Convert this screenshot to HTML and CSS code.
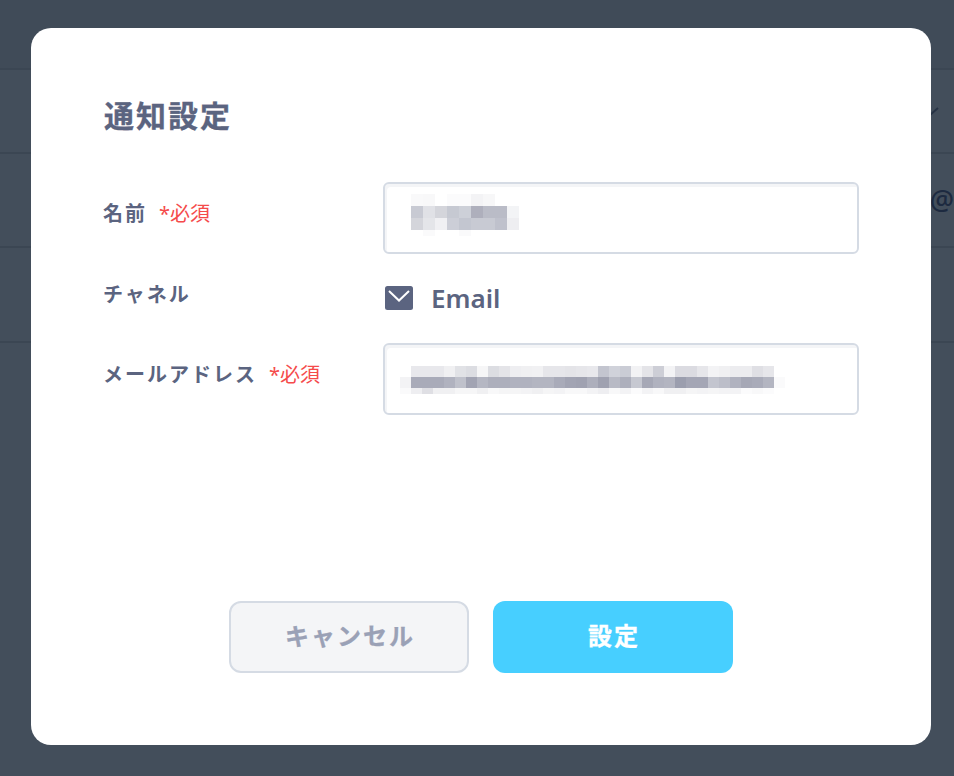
FILE: index.html
```html
<!DOCTYPE html>
<html lang="ja">
<head>
    <meta charset="UTF-8">
    <meta name="viewport" content="width=device-width, initial-scale=1.0">
    <title>通知設定</title>
    <link rel="stylesheet" href="styles.css">
</head>
<body>
    <div class="page">
        <div class="bg-row bg-row-head"></div>
        <div class="bg-row bg-row-tall">
            <svg class="bg-chevron" width="12" height="12" viewBox="0 0 12 12"><path d="M1 10 L9 3" fill="none" stroke="#273345" stroke-width="2"/></svg>
        </div>
        <div class="bg-row bg-row-item"><span class="bg-at">@</span></div>
        <div class="bg-row bg-row-last"></div>
    </div>

    <div class="overlay">
        <div class="modal">
            <h1>通知設定</h1>

            <div class="field">
                <div class="field-label">名前<span class="required">*必須</span></div>
                <div class="input">
                    <svg class="blur blur-name" viewBox="0 0 472 68" aria-hidden="true">
                        <rect x="26" y="10" fill="#f9f9fa"/><rect x="38" y="10" fill="#f8f8f9"/><rect x="62" y="10" fill="#fbfbfc"/><rect x="74" y="10" fill="#fbfbfc"/><rect x="86" y="10" fill="#f3f3f5"/><rect x="98" y="10" fill="#f7f7f8"/>
                        <rect x="26" y="22" fill="#c8cad3"/><rect x="38" y="22" fill="#e0e1e6"/><rect x="50" y="22" fill="#d4d5db"/><rect x="62" y="22" fill="#c6c9d2"/><rect x="74" y="22" fill="#cdd0d8"/><rect x="86" y="22" fill="#aeafbc"/><rect x="98" y="22" fill="#babcc7"/><rect x="110" y="22" fill="#babcc7"/><rect x="122" y="22" fill="#f3f4f6"/>
                        <rect x="26" y="34" fill="#d4d5db"/><rect x="38" y="34" fill="#e4e5e9"/><rect x="50" y="34" fill="#f0f0f3"/><rect x="62" y="34" fill="#ccced7"/><rect x="74" y="34" fill="#c3c6d0"/><rect x="86" y="34" fill="#c8cad3"/><rect x="98" y="34" fill="#c8cad3"/><rect x="110" y="34" fill="#bfc1cc"/><rect x="122" y="34" fill="#eeeef1"/>
                        <rect x="38" y="46" class="cell-low" fill="#fafafb"/><rect x="74" y="46" class="cell-low" fill="#fafafb"/>
                    </svg>
                </div>
            </div>

            <div class="field field-static">
                <div class="field-label">チャネル</div>
                <div class="channel">
                    <svg class="mail-icon" width="28" height="24" viewBox="0 0 28 24">
                        <rect width="28" height="24" rx="2.5" fill="#5b6480"/>
                        <path d="M4 5 L14 14.5 L24 5" fill="none" stroke="#fff" stroke-width="2"/>
                    </svg>
                    <span>Email</span>
                </div>
            </div>

            <div class="field">
                <div class="field-label">メールアドレス<span class="required">*必須</span></div>
                <div class="input">
                    <svg class="blur" viewBox="0 0 472 68" aria-hidden="true">
                        <rect x="26" y="21" fill="#e8e8ec"/><rect x="37" y="21" fill="#e8e8ec"/><rect x="48" y="21" fill="#e8e8ec"/><rect x="59" y="21" fill="#f0f0f2"/><rect x="70" y="21" fill="#e1e2e6"/><rect x="81" y="21" fill="#dcdde2"/><rect x="92" y="21" fill="#f6f6f7"/><rect x="103" y="21" fill="#dcdde2"/><rect x="114" y="21" fill="#e4e4e8"/><rect x="125" y="21" fill="#eeeef1"/><rect x="136" y="21" fill="#f0f0f2"/><rect x="147" y="21" fill="#f1f1f3"/><rect x="158" y="21" fill="#e6e6ea"/><rect x="169" y="21" fill="#e6e6ea"/><rect x="180" y="21" fill="#e4e4e8"/><rect x="191" y="21" fill="#e6e6ea"/><rect x="202" y="21" fill="#e8e8ec"/><rect x="213" y="21" fill="#c3c5cf"/><rect x="224" y="21" fill="#d0d2da"/><rect x="235" y="21" fill="#caccd5"/><rect x="246" y="21" fill="#f2f2f4"/><rect x="257" y="21" fill="#e4e4e8"/><rect x="268" y="21" fill="#cdced6"/><rect x="279" y="21" fill="#f3f3f5"/><rect x="290" y="21" fill="#dbdbe1"/><rect x="301" y="21" fill="#dbdbe1"/><rect x="312" y="21" fill="#e6e6ea"/><rect x="323" y="21" fill="#f3f3f5"/><rect x="334" y="21" fill="#f0f0f2"/><rect x="345" y="21" fill="#ececef"/><rect x="356" y="21" fill="#ececef"/><rect x="367" y="21" fill="#dfdfe4"/><rect x="378" y="21" fill="#e6e6ea"/>
                        <rect x="15" y="32" fill="#f3f3f5"/><rect x="26" y="32" fill="#a9abb9"/><rect x="37" y="32" fill="#a9abb9"/><rect x="48" y="32" fill="#a9abb9"/><rect x="59" y="32" fill="#b0b2bf"/><rect x="70" y="32" fill="#bfc1cb"/><rect x="81" y="32" fill="#a2a4b3"/><rect x="92" y="32" fill="#b5b7c3"/><rect x="103" y="32" fill="#adafbc"/><rect x="114" y="32" fill="#adafbc"/><rect x="125" y="32" fill="#b0b2bf"/><rect x="136" y="32" fill="#b0b2bf"/><rect x="147" y="32" fill="#b3b5c1"/><rect x="158" y="32" fill="#b3b5c1"/><rect x="169" y="32" fill="#a9abb9"/><rect x="180" y="32" fill="#a2a4b3"/><rect x="191" y="32" fill="#a0a2b1"/><rect x="202" y="32" fill="#adafbc"/><rect x="213" y="32" fill="#9fa1b0"/><rect x="224" y="32" fill="#b8bac5"/><rect x="235" y="32" fill="#adafbc"/><rect x="246" y="32" fill="#c6c8d1"/><rect x="257" y="32" fill="#a6a8b6"/><rect x="268" y="32" fill="#b0b2bf"/><rect x="279" y="32" fill="#b3b5c1"/><rect x="290" y="32" fill="#9b9eae"/><rect x="301" y="32" fill="#a4a6b5"/><rect x="312" y="32" fill="#a4a6b5"/><rect x="323" y="32" fill="#c3c5cf"/><rect x="334" y="32" fill="#bcbec9"/><rect x="345" y="32" fill="#b0b2bf"/><rect x="356" y="32" fill="#a6a8b6"/><rect x="367" y="32" fill="#a9abb9"/><rect x="378" y="32" fill="#b3b5c1"/><rect x="389" y="32" fill="#fafafb"/>
                        <rect x="15" y="43" class="cell-low" fill="#fafafb"/><rect x="26" y="43" class="cell-low" fill="#eeeef1"/><rect x="37" y="43" class="cell-low" fill="#dfdfe4"/><rect x="48" y="43" class="cell-low" fill="#f0f0f2"/><rect x="59" y="43" class="cell-low" fill="#f0f0f2"/><rect x="70" y="43" class="cell-low" fill="#f6f6f7"/><rect x="81" y="43" class="cell-low" fill="#f6f6f7"/><rect x="92" y="43" class="cell-low" fill="#f0f0f2"/><rect x="103" y="43" class="cell-low" fill="#f8f8f9"/><rect x="114" y="43" class="cell-low" fill="#f5f5f6"/><rect x="125" y="43" class="cell-low" fill="#f5f5f6"/><rect x="136" y="43" class="cell-low" fill="#f3f3f5"/><rect x="147" y="43" class="cell-low" fill="#f0f0f2"/><rect x="158" y="43" class="cell-low" fill="#f5f5f6"/><rect x="169" y="43" class="cell-low" fill="#f3f3f5"/><rect x="180" y="43" class="cell-low" fill="#f8f8f9"/><rect x="191" y="43" class="cell-low" fill="#f8f8f9"/><rect x="202" y="43" class="cell-low" fill="#f3f3f5"/><rect x="213" y="43" class="cell-low" fill="#eeeef1"/><rect x="224" y="43" class="cell-low" fill="#f8f8f9"/><rect x="235" y="43" class="cell-low" fill="#f3f3f5"/><rect x="246" y="43" class="cell-low" fill="#fbfbfc"/><rect x="257" y="43" class="cell-low" fill="#f3f3f5"/><rect x="268" y="43" class="cell-low" fill="#f8f8f9"/><rect x="279" y="43" class="cell-low" fill="#f0f0f2"/><rect x="290" y="43" class="cell-low" fill="#f0f0f2"/><rect x="301" y="43" class="cell-low" fill="#f5f5f6"/><rect x="312" y="43" class="cell-low" fill="#f3f3f5"/><rect x="323" y="43" class="cell-low" fill="#f5f5f6"/><rect x="334" y="43" class="cell-low" fill="#f3f3f5"/><rect x="345" y="43" class="cell-low" fill="#f3f3f5"/><rect x="356" y="43" class="cell-low" fill="#fbfbfc"/><rect x="367" y="43" class="cell-low" fill="#f8f8f9"/><rect x="378" y="43" class="cell-low" fill="#fbfbfc"/>
                    </svg>
                </div>
            </div>

            <div class="buttons">
                <button class="btn btn-cancel">キャンセル</button>
                <button class="btn btn-primary">設定</button>
            </div>
        </div>
    </div>
</body>
</html>
```

FILE: styles.css
```css
* {
    box-sizing: border-box;
}
html, body {
    height: 100%;
}
body {
    margin: 0;
    overflow: hidden;
    background-color: #434e5b;
    font-family: "Noto Sans", "Noto Sans CJK JP", sans-serif;
    color: #5b6480;
}

/* dimmed page behind the dialog */
.page {
    display: flex;
    flex-direction: column;
}
.bg-row {
    display: flex;
    justify-content: flex-end;
    align-items: center;
    border-bottom: 2px solid #3b4653;
}
.bg-row-head {
    height: 70px;
    background-color: #404b58;
}
.bg-row-tall {
    height: 84px;
    padding-right: 13px;
}
.bg-row-item {
    height: 94px;
}
.bg-row-last {
    height: 95px;
}
.bg-at {
    font-size: 27px;
    font-weight: 500;
    color: #1d2a40;
    margin-top: -2px;
}
.bg-chevron {
    display: block;
}

.overlay {
    position: fixed;
    top: 0;
    left: 0;
    width: 954px;
    height: 776px;
    padding: 28px 0 0 31px;
}
.modal {
    display: flex;
    flex-direction: column;
    width: 900px;
    height: 717px;
    padding: 66px 72px 72px;
    background-color: #fff;
    border-radius: 20px;
}
h1 {
    margin: 0 0 44px 1px;
    font-size: 30px;
    line-height: 44px;
    font-weight: 700;
    letter-spacing: 2px;
    -webkit-text-stroke: 0.3px #5b6480;
}

.field {
    display: flex;
    margin-bottom: 24px;
}
.field-label {
    width: 280px;
    flex-shrink: 0;
    padding-top: 18px;
    font-size: 20px;
    line-height: 28px;
    font-weight: 700;
    letter-spacing: 2px;
}
.required {
    margin-left: 12px;
    font-size: 20px;
    font-weight: 400;
    letter-spacing: 0;
    color: #f54b4b;
}
.input {
    width: 476px;
    height: 72px;
    border: 2px solid #d5dbe4;
    border-radius: 6px;
    background-color: #fff;
    box-shadow: inset 2px 3px 0 #f4f5f7;
    overflow: hidden;
}
.blur {
    display: block;
    width: 472px;
    height: 68px;
    shape-rendering: crispEdges;
}
.blur rect {
    width: 11px;
    height: 11px;
}
.blur-name rect {
    width: 12px;
    height: 12px;
}
.blur rect.cell-low {
    height: 6px;
}

.field-static {
    height: 41px;
}
.field-static .field-label {
    padding-top: 3px;
}
.channel {
    display: flex;
    align-items: center;
    padding: 0 0 2px 2px;
    font-size: 26px;
    font-weight: 600;
}
.mail-icon {
    display: block;
    margin-right: 18px;
}

.buttons {
    display: flex;
    justify-content: center;
    gap: 24px;
    margin-top: auto;
}
.btn {
    width: 240px;
    height: 72px;
    padding: 0 0 5px 2px;
    border-radius: 12px;
    font-family: inherit;
    font-size: 24px;
    font-weight: 700;
    letter-spacing: 2px;
    -webkit-text-stroke: 0.3px;
    cursor: pointer;
}
.btn-cancel {
    background-color: #f4f5f7;
    border: 2px solid #d5dbe4;
    color: #9aa1b6;
}
.btn-primary {
    background-color: #47cfff;
    border: none;
    color: #fff;
}
```
